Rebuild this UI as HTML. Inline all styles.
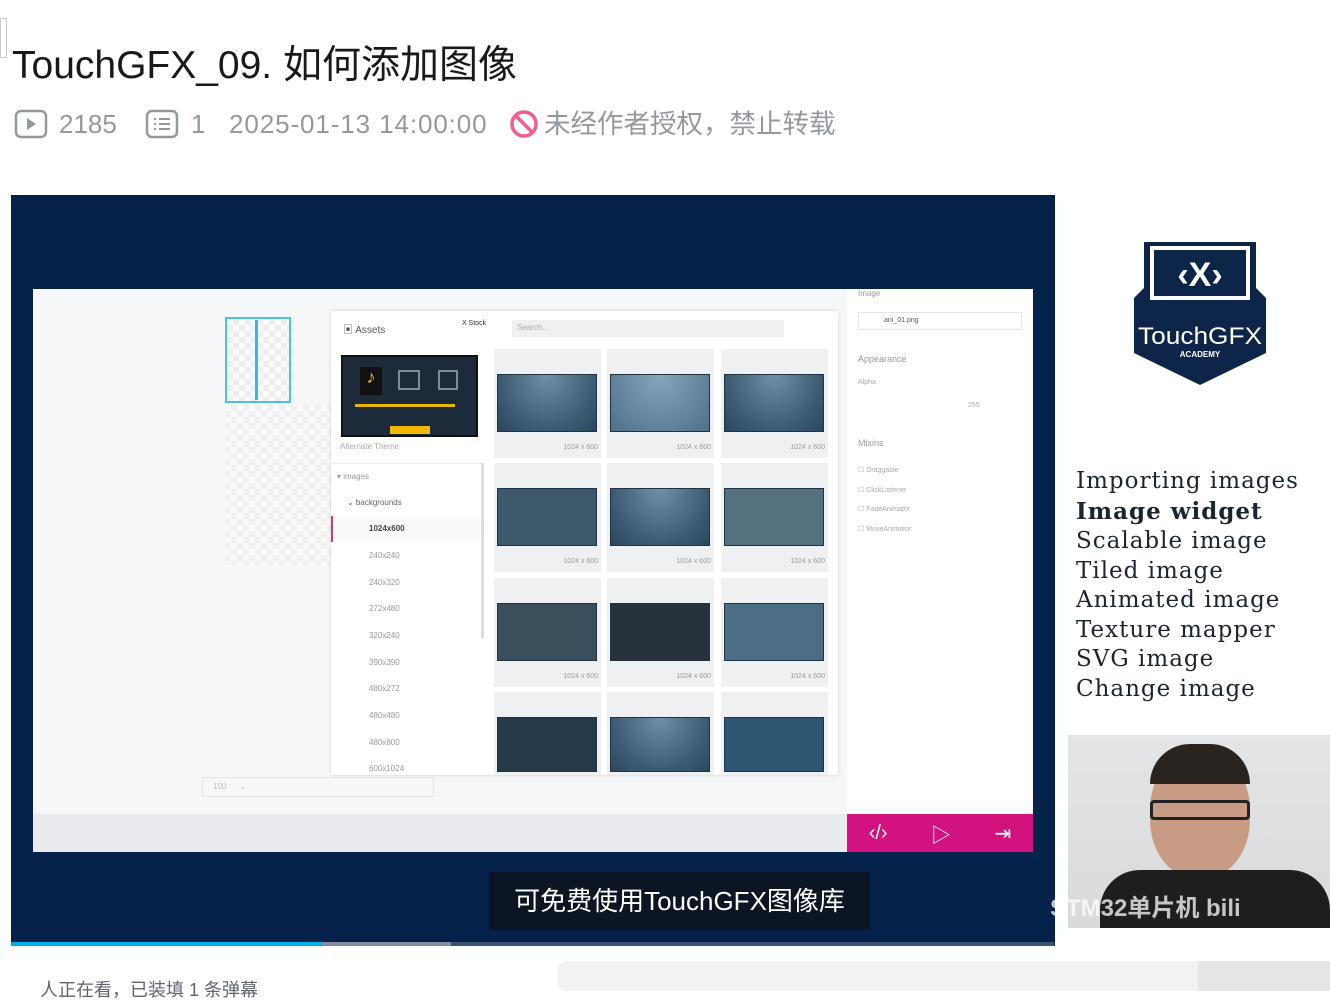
<!DOCTYPE html>
<html><head><meta charset="utf-8"><style>
*{margin:0;padding:0;box-sizing:border-box}
body{width:1330px;height:983px;overflow:hidden;background:#fff;font-family:"Liberation Sans","Noto Sans CJK SC",sans-serif;position:relative}
.a{position:absolute}
.cell{position:absolute;width:107px;height:109px;background:#eef0f2}
.cell .im{position:absolute;left:3px;top:25px;width:100px;height:58px;background:radial-gradient(ellipse at 50% 0%,#6f90a8,#3b5a72 70%,#2c465a);border:1px solid #1f3344}
.cell .t{position:absolute;right:3px;top:95px;font-size:7px;color:#999}
.tree{position:absolute;left:369px;font-size:8px;color:#999}
.pl{font-family:"DejaVu Serif","Liberation Serif",serif;font-size:23px;color:#1c2430;line-height:29.5px;letter-spacing:1px}
.m{position:absolute;top:108px;font-size:26px;color:#9499a0;white-space:nowrap;line-height:32px}
</style></head><body>
<div class="a" style="left:0;top:18px;width:7px;height:40px;background:#fff;border:1px solid #ccc"></div>
<div class="a" style="left:12px;top:34px;font-size:39px;color:#18191c">TouchGFX_09. 如何添加图像</div>
<svg class="a" style="left:14px;top:109px" width="34" height="30" viewBox="0 0 34 30"><rect x="2" y="2" width="30" height="26" rx="5" fill="none" stroke="#9499a0" stroke-width="2.5"/><path d="M13 9v12l9-6z" fill="#9499a0"/></svg>
<div class="m" style="left:59px">2185</div>
<svg class="a" style="left:145px;top:109px" width="34" height="30" viewBox="0 0 34 30"><rect x="2" y="2" width="30" height="26" rx="5" fill="none" stroke="#9499a0" stroke-width="2.5"/><path d="M9 10h2M14 10h11M9 15h2M14 15h11M9 20h2M14 20h11" stroke="#9499a0" stroke-width="2"/></svg>
<div class="m" style="left:191px">1</div>
<div class="m" style="left:229px;letter-spacing:0.9px">2025-01-13 14:00:00</div>
<svg class="a" style="left:509px;top:109px" width="30" height="30" viewBox="0 0 30 30"><circle cx="15" cy="15" r="12" fill="none" stroke="#f25d8e" stroke-width="3.5"/><path d="M7 7l16 16" stroke="#f25d8e" stroke-width="3.5"/></svg>
<div class="m" style="left:544px;font-size:26.5px">未经作者授权，禁止转载</div>

<!-- video -->
<div class="a" style="left:11px;top:195px;width:1044px;height:751px;background:#06224a"></div>
<div class="a" style="left:33px;top:289px;width:1000px;height:563px;background:#f6f7f9"></div>
<div class="a" style="left:225px;top:317px;width:66px;height:86px;border:2px solid #4cc3d9;background:repeating-conic-gradient(#eee 0 25%,#fafafa 0 50%) 0 0/12px 12px"></div>
<div class="a" style="left:255px;top:320px;width:3px;height:80px;background:#3ab8d6"></div>
<div class="a" style="left:225px;top:405px;width:106px;height:160px;background:repeating-conic-gradient(#f0f0f0 0 25%,#fafafa 0 50%) 0 0/12px 12px"></div>
<div class="a" style="left:331px;top:311px;width:507px;height:464px;background:#fff;box-shadow:0 0 3px #ccc"></div>
<div class="a" style="left:343px;top:321px;font-size:10px;color:#555">▣ Assets</div>
<div class="a" style="left:460px;top:320px;width:40px;height:16px;background:#fff;font-size:7px;color:#333">&nbsp;X Stock</div>
<div class="a" style="left:512px;top:320px;width:272px;height:17px;background:#eef0f2;font-size:8px;color:#aaa;padding:3px 5px">Search...</div>
<div class="a" style="left:341px;top:355px;width:137px;height:82px;background:#1d2a3a;border:2px solid #111"></div>
<div class="a" style="left:360px;top:367px;width:22px;height:28px;background:#111;color:#f5c400;font-size:18px;text-align:center">♪</div>
<div class="a" style="left:398px;top:370px;width:22px;height:20px;border:2px solid #7f8c9a"></div>
<div class="a" style="left:438px;top:370px;width:20px;height:20px;border:2px solid #7f8c9a"></div>
<div class="a" style="left:355px;top:404px;width:100px;height:3px;background:#e6b800"></div>
<div class="a" style="left:390px;top:426px;width:40px;height:8px;background:#f2b900"></div>
<div class="a" style="left:340px;top:442px;font-size:8px;color:#aaa">Alternate Theme</div>
<div class="a" style="left:331px;top:463px;width:150px;height:1px;background:#eee"></div>
<div class="a" style="left:337px;top:472px;font-size:8px;color:#999">▾ images</div>
<div class="a" style="left:347px;top:498px;font-size:8px;color:#666">⌄ backgrounds</div>
<div class="a" style="left:331px;top:516px;width:150px;height:26px;background:#fafafa;border-left:2px solid #c0456a"></div>
<div class="tree" style="top:524px;color:#444;font-weight:bold">1024x600</div>
<div class="tree" style="top:551px">240x240</div><div class="tree" style="top:578px">240x320</div>
<div class="tree" style="top:604px">272x480</div><div class="tree" style="top:631px">320x240</div>
<div class="tree" style="top:658px">390x390</div><div class="tree" style="top:684px">480x272</div>
<div class="tree" style="top:711px">480x480</div><div class="tree" style="top:738px">480x800</div>
<div class="tree" style="top:764px">600x1024</div>
<div class="a" style="left:481px;top:463px;width:3px;height:175px;background:#ddd"></div>
<div class="cell" style="left:494px;top:349px"><div class="im"></div><div class="t">1024 x 600</div></div>
<div class="cell" style="left:607px;top:349px"><div class="im" style="background:radial-gradient(ellipse at 50% 0%,#86a6bd,#4e7088)"></div><div class="t">1024 x 600</div></div>
<div class="cell" style="left:721px;top:349px"><div class="im"></div><div class="t">1024 x 600</div></div>
<div class="cell" style="left:494px;top:463px"><div class="im" style="background:#3e596c"></div><div class="t">1024 x 600</div></div>
<div class="cell" style="left:607px;top:463px"><div class="im"></div><div class="t">1024 x 600</div></div>
<div class="cell" style="left:721px;top:463px"><div class="im" style="background:#55707f"></div><div class="t">1024 x 600</div></div>
<div class="cell" style="left:494px;top:578px"><div class="im" style="background:#3b4e5c"></div><div class="t">1024 x 600</div></div>
<div class="cell" style="left:607px;top:578px"><div class="im" style="background:#27323c"></div><div class="t">1024 x 600</div></div>
<div class="cell" style="left:721px;top:578px"><div class="im" style="background:#4c6d84"></div><div class="t">1024 x 600</div></div>
<div class="cell" style="left:494px;top:692px;height:83px"><div class="im" style="background:#26394a;height:55px"></div></div>
<div class="cell" style="left:607px;top:692px;height:83px"><div class="im" style="height:55px"></div></div>
<div class="cell" style="left:721px;top:692px;height:83px"><div class="im" style="background:#2f5670;height:55px"></div></div>
<div class="a" style="left:202px;top:777px;width:232px;height:20px;border:1px solid #e3e3e3;font-size:8px;color:#bbb;padding:4px 10px">100 &nbsp;&nbsp;&nbsp;&nbsp;&nbsp;⌄</div>
<div class="a" style="left:847px;top:289px;width:186px;height:525px;background:#fff"></div>
<div class="a" style="left:858px;top:289px;font-size:8px;color:#999">Image</div>
<div class="a" style="left:858px;top:312px;width:164px;height:18px;border:1px solid #e5e5e5;font-size:7px;color:#555;padding:4px 25px">ani_01.png</div>
<div class="a" style="left:858px;top:354px;font-size:9px;color:#999">Appearance</div>
<div class="a" style="left:858px;top:379px;font-size:7px;color:#aaa">Alpha</div>
<div class="a" style="left:968px;top:402px;font-size:7px;color:#aaa">255</div>
<div class="a" style="left:858px;top:438px;font-size:9px;color:#999">Mixins</div>
<div class="a" style="left:858px;top:461px;font-size:7px;color:#aaa;line-height:19.5px">☐ Draggable<br>☐ ClickListener<br>☐ FadeAnimator<br>☐ MoveAnimator</div>
<div class="a" style="left:33px;top:814px;width:814px;height:38px;background:#e8eaed"></div>
<div class="a" style="left:847px;top:814px;width:186px;height:38px;background:#d2137f;color:#fff;font-size:20px;display:flex;align-items:center;justify-content:space-around">
<span>‹/›</span><span>▷</span><span>⇥</span></div>
<div class="a" style="left:489px;top:872px;width:381px;height:58px;background:#0b1524;color:#fff;font-size:26px;text-align:center;line-height:58px">可免费使用TouchGFX图像库</div>
<div class="a" style="left:11px;top:942px;width:311px;height:4px;background:#00aeec"></div>
<div class="a" style="left:322px;top:942px;width:129px;height:4px;background:#7d8ea3"></div>
<div class="a" style="left:451px;top:942px;width:603px;height:4px;background:#3c5274"></div>

<!-- right panel -->
<svg class="a" style="left:1130px;top:238px" width="140" height="150" viewBox="0 0 140 150">
<path d="M4 75 L4 60 L14 50 L14 4 L126 4 L126 50 L136 60 L136 115 L70 147 L4 115Z" fill="#0d2548"/>
<rect x="20" y="8" width="100" height="54" fill="#fff"/><rect x="24" y="12" width="92" height="46" fill="#0d2548"/>
<text x="70" y="48" fill="#fff" font-size="34" font-weight="bold" text-anchor="middle" font-family="Liberation Sans">‹X›</text>
<text x="70" y="106" fill="#fff" font-size="24" text-anchor="middle" font-family="Liberation Sans" textLength="124" lengthAdjust="spacingAndGlyphs">TouchGFX</text>
<text x="70" y="119" fill="#fff" font-size="8" font-weight="bold" text-anchor="middle" font-family="Liberation Sans">ACADEMY</text>
</svg>
<div class="a pl" style="left:1076px;top:467px">Importing images<br><b>Image widget</b><br>Scalable image<br>Tiled image<br>Animated image<br>Texture mapper<br>SVG image<br>Change image</div>
<div class="a" style="left:1068px;top:735px;width:262px;height:193px;background:linear-gradient(#e4e5e7,#d8d9db)"></div>
<div class="a" style="left:1150px;top:748px;width:100px;height:130px;border-radius:48% 48% 45% 45%;background:#c89c84"></div>
<div class="a" style="left:1150px;top:744px;width:100px;height:40px;border-radius:50px 50px 0 0;background:#2a2420"></div>
<div class="a" style="left:1150px;top:800px;width:100px;height:20px;border:3px solid #222;border-radius:4px"></div>
<div class="a" style="left:1100px;top:870px;width:230px;height:58px;background:#1e1e1f;border-radius:40px 40px 0 0"></div>
<div class="a" style="left:1050px;top:888px;font-size:24px;color:rgba(255,255,255,.75);font-weight:bold">STM32单片机 bili</div>
<div class="a" style="left:1252px;top:962px;font-size:11px;color:#888">ST中文论坛</div>

<div class="a" style="left:558px;top:961px;width:772px;height:30px;border-radius:8px;background:#f1f2f3"></div>
<div class="a" style="left:1198px;top:961px;width:132px;height:30px;background:#e3e5e7"></div>
<div class="a" style="left:40px;top:976px;font-size:18px;color:#61666d">人正在看，已装填 1 条弹幕</div>
</body></html>
